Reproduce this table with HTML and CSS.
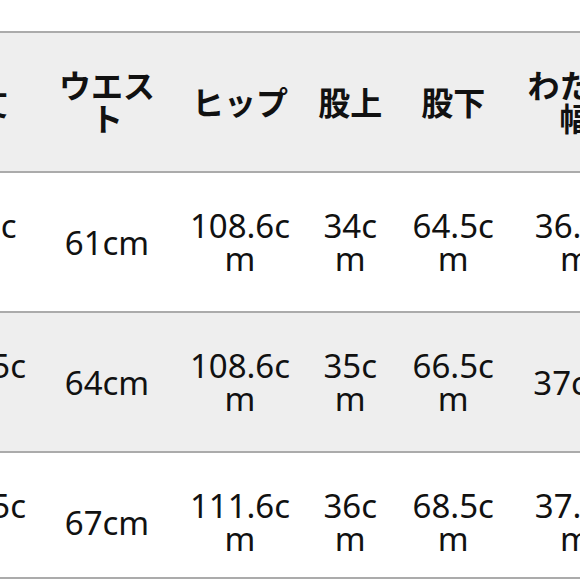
FILE: index.html
```html
<!DOCTYPE html>
<html lang="ja">
<head>
<meta charset="utf-8">
<title>サイズ表</title>
<link rel="stylesheet" href="styles.css">
</head>
<body>
<div class="viewport">
  <table class="size-table">
    <colgroup>
      <col class="c-a">
      <col class="c-b">
      <col class="c-c">
      <col class="c-d">
      <col class="c-e">
      <col class="c-f">
    </colgroup>
    <thead>
      <tr>
        <th>総丈</th>
        <th>ウエスト</th>
        <th>ヒップ</th>
        <th>股上</th>
        <th>股下</th>
        <th>わたり幅</th>
      </tr>
    </thead>
    <tbody>
      <tr>
        <td>98.5cm</td>
        <td>61cm</td>
        <td>108.6cm</td>
        <td>34cm</td>
        <td>64.5cm</td>
        <td>36.2cm</td>
      </tr>
      <tr class="alt">
        <td>100.5cm</td>
        <td>64cm</td>
        <td>108.6cm</td>
        <td>35cm</td>
        <td>66.5cm</td>
        <td>37cm</td>
      </tr>
      <tr class="last">
        <td>102.5cm</td>
        <td>67cm</td>
        <td>111.6cm</td>
        <td>36cm</td>
        <td>68.5cm</td>
        <td>37.7cm</td>
      </tr>
    </tbody>
  </table>
</div>
</body>
</html>
```
FILE: styles.css
```css
html, body {
  margin: 0;
  padding: 0;
  background: #ffffff;
}

.viewport {
  width: 580px;
  height: 580px;
  overflow: hidden;
}

.size-table {
  table-layout: fixed;
  border-collapse: collapse;
  width: 727px;
  margin: 31px 0 0 -88.5px;
  font-family: "Noto Sans", "Noto Sans CJK JP", sans-serif;
  font-size: 32px;
  line-height: 33px;
  color: #111111;
}

.c-a { width: 129px; }
.c-b { width: 133px; }
.c-c { width: 133px; }
.c-d { width: 87.5px; }
.c-e { width: 118.5px; }
.c-f { width: 126px; }

.size-table th,
.size-table td {
  padding: 0 11px;
  text-align: center;
  vertical-align: middle;
  word-break: break-all;
  border-top: 2px solid #ababab;
  border-bottom: 2px solid #ababab;
  height: 138px;
}

.size-table th {
  font-weight: 700;
  background: #eeeeee;
}

.size-table td {
  font-size: 33px;
}

.size-table tr.alt td {
  background: #eeeeee;
}

.size-table tr.last td {
  height: 110px;
  padding-top: 14px;
}
```
